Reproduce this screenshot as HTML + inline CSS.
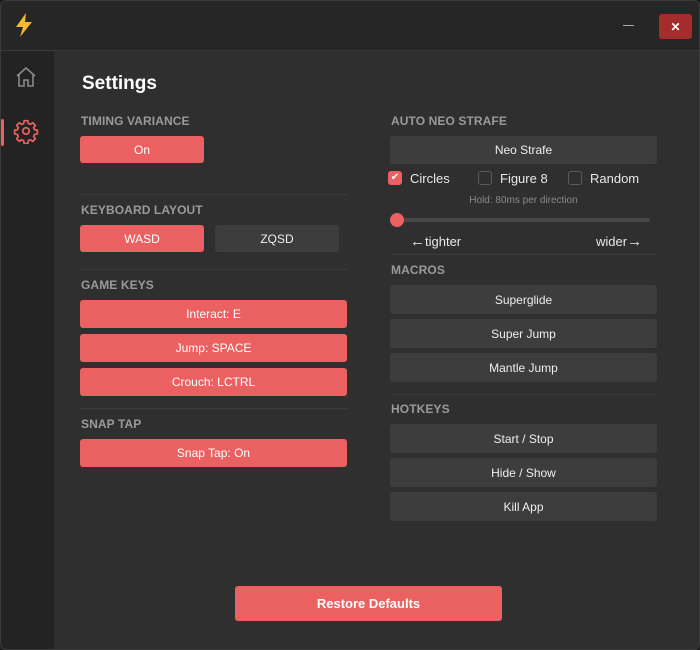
<!DOCTYPE html>
<html><head><style>
*{box-sizing:border-box;margin:0;padding:0}
body{width:700px;height:650px;background:#1c1c1c;font-family:"Liberation Sans",sans-serif;position:relative;overflow:hidden}
.win{position:absolute;left:0;top:0;width:700px;height:650px;border-radius:6px;overflow:hidden;background:#2f2f2f}
.frame{position:absolute;left:0;top:0;width:700px;height:650px;border:1px solid #3a3a3a;border-radius:6px;pointer-events:none}
.title{position:absolute;left:0;top:0;width:700px;height:51px;background:#262626;border-bottom:1px solid #3a3a3a}
.side{position:absolute;left:0;top:51px;width:54px;height:600px;background:#232323}
.abs{position:absolute}
.h{position:absolute;font-size:12px;font-weight:bold;color:#9a9a9a;letter-spacing:.1px}
.btn{position:absolute;background:#eb6060;color:#fff;font-size:12px;display:flex;align-items:center;justify-content:center;border-radius:3px}
.g{background:#3d3d3d;color:#eee}
.div{position:absolute;height:1px;background:#3b3b3b}
.cb{position:absolute;width:14px;height:14px;border:1px solid #5a5a5a;border-radius:3px}
.lbl{position:absolute;font-size:13px;color:#e8e8e8}
</style></head><body>
<div class="win">
<div class="title">
<svg class="abs" style="left:13px;top:12px" width="22" height="26" viewBox="0 0 22 26"><path d="M13 1 L3 15 H10 L7 25 L19 10 H12 Z" fill="#f5b82e"/></svg>
<div class="abs" style="left:623px;top:25px;width:11px;height:1px;background:#aaa"></div>
<div class="abs" style="left:659px;top:14px;width:33px;height:25px;background:#a52c2c;border-radius:3px;color:#fff;font-size:12px;font-weight:bold;display:flex;align-items:center;justify-content:center">✕</div>
</div>
<div class="side">
<svg class="abs" style="left:14px;top:14px" width="24" height="24" viewBox="0 0 24 24" fill="none" stroke="#8a8a8a" stroke-width="1.6"><path d="M3 11 L12 3 L21 11 M5 9.5 V21 H10 V15 H14 V21 H19 V9.5"/></svg>
<div class="abs" style="left:1px;top:68px;width:3px;height:27px;background:#eb6060;border-radius:2px"></div>
<svg class="abs" style="left:13px;top:67px" width="26" height="26" viewBox="0 0 24 24" fill="none" stroke="#eb6060" stroke-width="1.6"><circle cx="12" cy="12" r="3"/><path d="M10.3 2.5h3.4l.5 2.6 1.8.8 2.2-1.5 2.4 2.4-1.5 2.2.8 1.8 2.6.5v3.4l-2.6.5-.8 1.8 1.5 2.2-2.4 2.4-2.2-1.5-1.8.8-.5 2.6h-3.4l-.5-2.6-1.8-.8-2.2 1.5-2.4-2.4 1.5-2.2-.8-1.8-2.6-.5v-3.4l2.6-.5.8-1.8-1.5-2.2 2.4-2.4 2.2 1.5 1.8-.8z"/></svg>
</div>
<div class="abs" style="left:82px;top:73px;font-size:19px;font-weight:bold;color:#fff">Settings</div>

<div class="h" style="left:81px;top:114px">TIMING VARIANCE</div>
<div class="btn" style="left:80px;top:136px;width:124px;height:27px">On</div>
<div class="div" style="left:80px;top:194px;width:268px"></div>
<div class="h" style="left:81px;top:203px">KEYBOARD LAYOUT</div>
<div class="btn" style="left:80px;top:225px;width:124px;height:27px">WASD</div>
<div class="btn g" style="left:215px;top:225px;width:124px;height:27px">ZQSD</div>
<div class="div" style="left:80px;top:269px;width:268px"></div>
<div class="h" style="left:81px;top:278px">GAME KEYS</div>
<div class="btn" style="left:80px;top:300px;width:267px;height:28px">Interact: E</div>
<div class="btn" style="left:80px;top:334px;width:267px;height:28px">Jump: SPACE</div>
<div class="btn" style="left:80px;top:368px;width:267px;height:28px">Crouch: LCTRL</div>
<div class="div" style="left:80px;top:408px;width:268px"></div>
<div class="h" style="left:81px;top:417px">SNAP TAP</div>
<div class="btn" style="left:80px;top:439px;width:267px;height:28px">Snap Tap: On</div>

<div class="h" style="left:391px;top:114px">AUTO NEO STRAFE</div>
<div class="btn g" style="left:390px;top:136px;width:267px;height:28px">Neo Strafe</div>
<div class="cb" style="left:388px;top:171px;background:#eb6060;border-color:#eb6060;color:#fff;font-size:10px;line-height:12px;text-align:center">✔</div>
<div class="lbl" style="left:410px;top:171px">Circles</div>
<div class="cb" style="left:478px;top:171px"></div>
<div class="lbl" style="left:500px;top:171px">Figure 8</div>
<div class="cb" style="left:568px;top:171px"></div>
<div class="lbl" style="left:590px;top:171px">Random</div>
<div class="abs" style="left:390px;top:195px;width:267px;text-align:center;font-size:10px;color:#8a8a8a">Hold: 80ms per direction</div>
<div class="abs" style="left:392px;top:218px;width:258px;height:4px;background:#474747;border-radius:2px"></div>
<div class="abs" style="left:390px;top:213px;width:14px;height:14px;background:#eb6060;border-radius:50%"></div>
<div class="lbl" style="left:410px;top:233px"><span style="font-size:15px">←</span>tighter</div>
<div class="lbl" style="left:596px;top:233px">wider<span style="font-size:15px">→</span></div>
<div class="div" style="left:390px;top:254px;width:268px"></div>
<div class="h" style="left:391px;top:263px">MACROS</div>
<div class="btn g" style="left:390px;top:285px;width:267px;height:29px">Superglide</div>
<div class="btn g" style="left:390px;top:319px;width:267px;height:29px">Super Jump</div>
<div class="btn g" style="left:390px;top:353px;width:267px;height:29px">Mantle Jump</div>
<div class="div" style="left:390px;top:394px;width:268px"></div>
<div class="h" style="left:391px;top:402px">HOTKEYS</div>
<div class="btn g" style="left:390px;top:424px;width:267px;height:29px">Start / Stop</div>
<div class="btn g" style="left:390px;top:458px;width:267px;height:29px">Hide / Show</div>
<div class="btn g" style="left:390px;top:492px;width:267px;height:29px">Kill App</div>

<div class="btn" style="left:235px;top:586px;width:267px;height:35px;font-size:13px;font-weight:bold">Restore Defaults</div>
<div class="frame"></div>
</div>
</body></html>
